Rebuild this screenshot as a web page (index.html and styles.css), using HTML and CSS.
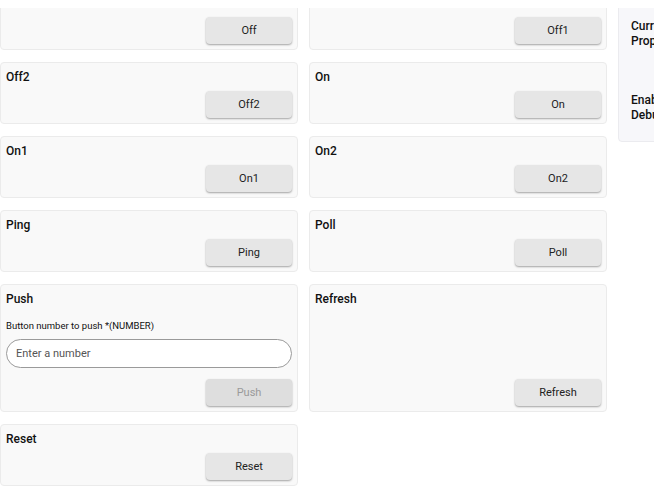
FILE: index.html
```html
<!DOCTYPE html>
<html>
<head>
<meta charset="utf-8">
<link rel="stylesheet" href="styles.css">
</head>
<body>
<div class="viewport">
  <div class="layout">
    <main class="grid">
      <section class="card"><h3 class="title">Off</h3><div class="actions"><button class="btn">Off</button></div></section>
      <section class="card"><h3 class="title">Off1</h3><div class="actions"><button class="btn">Off1</button></div></section>
      <section class="card"><h3 class="title">Off2</h3><div class="actions"><button class="btn">Off2</button></div></section>
      <section class="card"><h3 class="title">On</h3><div class="actions"><button class="btn">On</button></div></section>
      <section class="card"><h3 class="title">On1</h3><div class="actions"><button class="btn">On1</button></div></section>
      <section class="card"><h3 class="title">On2</h3><div class="actions"><button class="btn">On2</button></div></section>
      <section class="card"><h3 class="title">Ping</h3><div class="actions"><button class="btn">Ping</button></div></section>
      <section class="card"><h3 class="title">Poll</h3><div class="actions"><button class="btn">Poll</button></div></section>
      <section class="card">
        <h3 class="title">Push</h3>
        <label class="label">Button number to push *(NUMBER)</label>
        <input class="input" type="text" placeholder="Enter a number">
        <div class="actions"><button class="btn" disabled>Push</button></div>
      </section>
      <section class="card"><h3 class="title">Refresh</h3><div class="actions"><button class="btn">Refresh</button></div></section>
      <section class="card"><h3 class="title">Reset</h3><div class="actions"><button class="btn">Reset</button></div></section>
    </main>
    <aside class="side">
      <div class="prop">Current<br>Properties</div>
      <div class="prop">Enable<br>Debug</div>
    </aside>
  </div>
</div>
</body>
</html>
```
FILE: styles.css
```css
html, body {
  margin: 0;
  padding: 0;
  background: #ffffff;
  overflow: hidden;
}
body {
  font-family: Roboto, "Liberation Sans", sans-serif;
  color: #111;
}
.viewport {
  margin-top: 8px;
  height: 492px;
  overflow: hidden;
}
.layout {
  display: flex;
  align-items: flex-start;
  gap: 11px;
  margin-top: -20px;
}
.grid {
  display: grid;
  grid-template-columns: 298px 298px;
  column-gap: 11px;
  row-gap: 12px;
  flex: none;
}
.card {
  box-sizing: border-box;
  background: #f9f9f9;
  border: 1px solid #ebebeb;
  border-radius: 4px;
  padding: 5px;
  display: flex;
  flex-direction: column;
}
.title {
  margin: 0 0 5px 0;
  font-size: 12px;
  font-weight: 500;
  line-height: 18px;
  height: 18px;
  color: #111;
}
.actions {
  margin-top: auto;
  display: flex;
  justify-content: flex-end;
}
.btn {
  width: 86px;
  height: 27px;
  border: none;
  border-radius: 4px;
  background: #e6e6e6;
  box-shadow: 0 1px 2px rgba(0, 0, 0, 0.35);
  font-family: Roboto, "Liberation Sans", sans-serif;
  font-size: 11px;
  color: #222;
  padding: 0;
}
.btn:disabled {
  background: #dedede;
  color: #9a9a9a;
}
.label {
  font-size: 9.5px;
  line-height: 14px;
  height: 14px;
  margin-top: 6px;
  color: #111;
}
.input {
  box-sizing: border-box;
  margin: 6px 0 11px 0;
  height: 29px;
  width: 100%;
  border: 1px solid #9a9a9a;
  border-radius: 15px;
  background: #fff;
  padding: 0 9px;
  font-family: Roboto, "Liberation Sans", sans-serif;
  font-size: 11px;
  outline: none;
}
.input::placeholder {
  color: #555;
}
.side {
  flex: none;
  box-sizing: border-box;
  width: 200px;
  height: 154px;
  background: #f7f7fa;
  border: 1px solid #ebebef;
  border-radius: 4px;
  padding: 30px 12px 0 12px;
}
.prop {
  font-size: 12px;
  font-weight: 500;
  line-height: 15px;
  color: #111;
  margin-bottom: 44px;
}
```
